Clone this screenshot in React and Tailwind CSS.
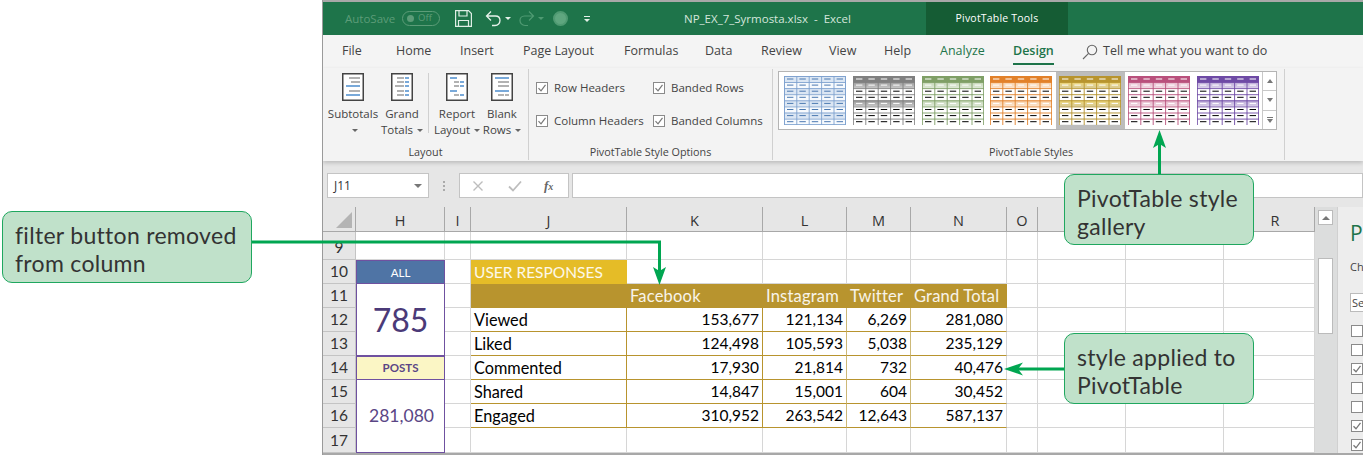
import React from "react";

const B = "#1f6fc0", G = "#7f7f7f";

function DocIcon({ rows }) {
  return (
    <svg width="22" height="28" viewBox="0 0 22 28" className="block">
      <rect x="0.75" y="0.75" width="20.5" height="26.5" fill="#fff" stroke="#444" strokeWidth="1.5" />
      {rows.map((r, i) => (
        <path key={i} d={`M${r[0]} ${r[1]}H${r[2]}`} stroke={r[3]} strokeWidth="1.2" />
      ))}
    </svg>
  );
}

const SUBICON = [[7,5,18,G],[9,9,18,G],[4,13,18,B],[7,18,18,G],[4,22,18,B]];
const GRANDICON = [[6,5,13,G],[14,5,18,B],[6,9,13,G],[14,9,18,B],[4,13,13,G],[14,13,18,B],[6,18,13,G],[14,18,18,B],[6,22,13,G],[14,22,18,B]];
const REPORTICON = [[4,5,11,B],[8,9,13,G],[14,9,18,B],[8,13,13,G],[14,13,18,B],[4,18,11,B],[8,22,13,G],[14,22,18,B]];
const BLANKICON = [[4,5,18,B],[7,9,18,G],[7,13,18,G],[4,18,18,B],[7,22,13,G],[14,22,18,G]];

function Caret({ color = "#666" }) {
  return <span className="inline-block w-0 h-0 border-l-[3px] border-r-[3px] border-t-[3px] border-l-transparent border-r-transparent align-middle ml-1" style={{ borderTopColor: color }} />;
}

function Big({ rows, l1, l2, w }) {
  return (
    <div className={`flex flex-col items-center ${w}`}>
      <DocIcon rows={rows} />
      <div className="mt-[5px] text-[11.5px] leading-[16px] text-[#444] whitespace-nowrap text-center">{l1}</div>
      <div className="text-[11.5px] leading-[16px] text-[#444] whitespace-nowrap text-center">
        {l2}
        <Caret />
      </div>
    </div>
  );
}

function Check({ label, w }) {
  return (
    <div className={`flex items-center ${w}`}>
      <span className="w-[12px] h-[12px] border border-[#8a8a8a] bg-white flex items-center justify-center shrink-0">
        <svg width="10" height="10" viewBox="0 0 10 10"><path d="M1.5 5.2 4 7.8 8.5 1.8" fill="none" stroke="#777" strokeWidth="1.2" /></svg>
      </span>
      <span className="ml-[6px] text-[11.5px] text-[#444] whitespace-nowrap">{label}</span>
    </div>
  );
}

function Swatch({ id, head, line, tint, dash = "#000", blue }) {
  const W = 62, H = 49, cw = W / 5, rh = 6.1;
  const cells = [];
  for (let r = 0; r < 8; r++) {
    const y = r * rh;
    const isHead = !blue && r === 0;
    const isBand = !blue && (r === 1 || r === 4);
    const fill = blue ? (r % 2 === 0 ? "#dbe6f3" : "#f7fafd") : isHead ? head : isBand ? `url(#band${id})` : "#fff";
    cells.push(<rect key={"f" + r} x="0" y={y} width={W} height={rh} fill={fill} />);
    for (let c = 0; c < 5; c++) {
      const dc = blue ? "#4a78b0" : isHead || isBand ? "#fff" : dash;
      cells.push(<path key={`d${r}${c}`} d={`M${c * cw + 3} ${y + 3}H${c * cw + cw - 3}`} stroke={dc} strokeWidth="1" />);
    }
    if (!isHead) cells.push(<path key={"h" + r} d={`M0 ${y + 0.4}H${W}`} stroke={line} strokeWidth="0.9" />);
  }
  for (let c = 0; c <= 5; c++) {
    cells.push(<path key={"v" + c} d={`M${Math.min(c * cw + 0.4, W - 0.4)} ${blue ? 0 : rh}V${H}`} stroke={line} strokeWidth="0.9" />);
  }
  if (blue) {
    cells.push(<rect key="o" x="0.4" y="0.4" width={W - 0.8} height={H - 0.8} fill="none" stroke={line} strokeWidth="0.9" />);
  }
  return (
    <svg width={W} height={H} viewBox={`0 0 ${W} ${H}`} className="block">
      <defs>
        <linearGradient id={`band${id}`} x1="0" y1="0" x2="0" y2="1">
          <stop offset="0" stopColor={tint || "#fff"} />
          <stop offset="1" stopColor={tint || "#fff"} stopOpacity="0.55" />
        </linearGradient>
      </defs>
      {cells}
    </svg>
  );
}

const SW = [
  { blue: true, line: "#7ea2cf" },
  { head: "#7f7f7f", line: "#7f7f7f", tint: "#9a9a9a" },
  { head: "#7f9f66", line: "#7f9f66", tint: "#c4d6b6" },
  { head: "#e2812a", line: "#e2812a", tint: "#f8cfa6" },
  { head: "#b8942e", line: "#b8942e", tint: "#eed677" },
  { head: "#b9507c", line: "#b9507c", tint: "#e6b9cc" },
  { head: "#6e4aa5", line: "#6e4aa5", tint: "#bcaad8" },
];

const COLS = ["H", "I", "J", "K", "L", "M", "N", "O", "", "", "R"];
const DATA = [
  ["Viewed", "153,677", "121,134", "6,269", "281,080"],
  ["Liked", "124,498", "105,593", "5,038", "235,129"],
  ["Commented", "17,930", "21,814", "732", "40,476"],
  ["Shared", "14,847", "15,001", "604", "30,452"],
  ["Engaged", "310,952", "263,542", "12,643", "587,137"],
];
const cellFont = { fontFamily: "Lato, sans-serif" };

function RowHead({ n }) {
  return (
    <div className="bg-[#e6e6e6] border-r border-b border-[#c4c4c4] flex items-end justify-center text-[15.5px] leading-[23px] text-[#333]" style={cellFont}>
      {n}
    </div>
  );
}
const blank = "bg-white border-r border-b border-[#d6d6d6]";

function Sheet() {
  const cells = [];
  cells.push(
    <div key="corner" className="bg-[#e6e6e6] border-r border-b border-[#a8a8a8] relative">
      <span className="absolute right-[3px] bottom-[3px] w-0 h-0 border-t-[16px] border-t-transparent border-r-[16px] border-r-[#b4b4b4]" />
    </div>
  );
  COLS.forEach((c, i) =>
    cells.push(
      <div key={"col" + i} className={`bg-[#e6e6e6] border-r border-b border-[#a8a8a8] flex items-center justify-center pt-[3px] text-[14.5px] text-[#333] ${c === "R" ? "pl-[12px]" : ""}`}>{c}</div>
    )
  );
  const trailing = (r) => ["O", "P", "Q", "R"].map((c) => <div key={c + r} className={blank} />);
  cells.push(<RowHead key="r9" n={9} />);
  for (let i = 0; i < 11; i++) cells.push(<div key={"b9" + i} className={blank} />);
  cells.push(<RowHead key="r10" n={10} />);
  cells.push(<div key="all" className="bg-[#4f74a5] border-x border-y border-[#6f51a0] text-white text-[11.5px] pt-[1px] flex items-center justify-center" style={cellFont}>ALL</div>);
  cells.push(<div key="i10" className={blank} />);
  cells.push(<div key="ur" className="bg-[#e5bc27] text-white/90 text-[15.5px] pl-[3px] pt-[1px] flex items-center whitespace-nowrap" style={cellFont}>USER RESPONSES</div>);
  for (const c of ["K", "L", "M", "N"]) cells.push(<div key={c + 10} className={blank} />);
  cells.push(...trailing(10));
  cells.push(<RowHead key="r11" n={11} />);
  cells.push(<div key="785" className="row-span-3 bg-white border-x border-b border-[#6f51a0] flex items-center justify-center text-[32px] text-[#4b3a78]" style={cellFont}>785</div>);
  cells.push(<div key="i11" className={blank} />);
  cells.push(<div key="j11" className="bg-[#b8942e]" />);
  [["Facebook", "K"], ["Instagram", "L"], ["Twitter", "M"], ["Grand Total", "N"]].forEach(([t, c]) =>
    cells.push(<div key={c + 11} className="bg-[#b8942e] text-white/90 text-[16.5px] tracking-[0.2px] pl-[3px] pt-[1px] flex items-center whitespace-nowrap" style={cellFont}>{t}</div>)
  );
  cells.push(...trailing(11));
  DATA.forEach((row, i) => {
    const n = 12 + i;
    cells.push(<RowHead key={"r" + n} n={n} />);
    if (n === 14) cells.push(<div key="posts" className="bg-[#fbf6c5] border-x border-y border-[#6f51a0] text-[#5a4685] text-[11.5px] font-bold flex items-center justify-center" style={cellFont}>POSTS</div>);
    if (n === 15) cells.push(<div key="281" className="row-span-3 bg-white border-x border-b border-[#6f51a0] flex items-center justify-center pl-[2px] text-[17.5px] text-[#5a4685]" style={cellFont}>281,080</div>);
    cells.push(<div key={"i" + n} className={blank} />);
    row.forEach((t, j) =>
      cells.push(
        <div key={n + "c" + j} className={`bg-white border-b border-r border-b-[#b8942e] ${j === 0 || j === 1 ? "border-r-[#b8942e]" : j === 4 ? "border-r-[#d6d6d6]" : "border-r-[#cdb978]"} flex items-center pt-[1px] text-black ${j === 0 ? "pl-[3px] text-[16.3px]" : "justify-end pr-[3px] text-[15.5px]"}`} style={cellFont}>{t}</div>
      )
    );
    cells.push(...trailing(n));
  });
  cells.push(<RowHead key="r17" n={17} />);
  for (let i = 0; i < 10; i++) cells.push(<div key={"b17" + i} className={blank} />);
  return (
    <div className="w-[992px] shrink-0 grid grid-cols-[33px_89px_26px_156px_136px_84px_64px_96px_31px_88px_98px_91px] grid-rows-[25px_28px_24px_24px_24px_24px_24px_24px_24px_25px]">
      {cells}
    </div>
  );
}

function Callout({ cls, children }) {
  return (
    <div className={`absolute bg-[#c0e1ca] border border-[#1fa75f] rounded-[10px] pl-[12px] pt-[9px] text-[23px] leading-[28px] text-[#333] whitespace-nowrap ${cls}`} style={{ fontFamily: "Lato, sans-serif", letterSpacing: "0.3px" }}>
      {children}
    </div>
  );
}

const TABS = [
  ["File", "w-[73px] pl-[19px]"], ["Home", "w-[64px]"], ["Insert", "w-[63px]"], ["Page Layout", "w-[101px]"], ["Formulas", "w-[81px]"], ["Data", "w-[56px]"], ["Review", "w-[68px]"], ["View", "w-[55px]"], ["Help", "w-[56px]"],
];

export default function App() {
  return (
    <div className="relative w-[1363px] h-[455px] overflow-hidden bg-white flex" style={{ fontFamily: '"Open Sans", sans-serif' }}>
      <div className="w-[322px] shrink-0" />
      <div className="w-[1041px] h-[455px] flex flex-col border-l border-[#9a9a9a] bg-[#e6e6e6] overflow-hidden">
        {/* title bar */}
        <div className="h-[35px] shrink-0 border-t-2 border-[#a8a8a8] bg-[#1e744a] flex items-center relative">
          <span className="ml-[22px] text-[11.5px] text-[#5c9c78] w-[56px]">AutoSave</span>
          <span className="ml-[1px] w-[38px] h-[15px] rounded-full border border-[#5c9c78] flex items-center pl-[4px] gap-[4px]">
            <span className="w-[7px] h-[7px] rounded-full bg-[#5c9c78]" />
            <span className="text-[9.5px] text-[#5c9c78]">Off</span>
          </span>
          <svg className="ml-[15px]" width="17" height="17" viewBox="0 0 17 17" fill="none" stroke="#dfeee6" strokeWidth="1.2">
            <path d="M.6.6H13.5L16.4 3.5V16.4H.6Z" /><path d="M4 .6V6H12V.6M3.5 16.4V10.5H13.5V16.4" />
          </svg>
          <svg className="ml-[13px]" width="17" height="17" viewBox="0 0 17 17" fill="none" stroke="#e6f1ea" strokeWidth="1.3">
            <path d="M6 1.5 1.5 6 6 10.5M1.5 6H10.5C13.5 6 15 8 15 10.5S13 15.5 10 15.5H7" />
          </svg>
          <span className="ml-[3px] w-0 h-0 border-l-[3px] border-r-[3px] border-t-[3px] border-l-transparent border-r-transparent border-t-[#e6f1ea]" />
          <svg className="ml-[7px]" width="17" height="17" viewBox="0 0 17 17" fill="none" stroke="#4f9a72" strokeWidth="1.2">
            <path d="M11 1.5 15.5 6 11 10.5M15.5 6H6.5C3.5 6 2 8 2 10.5S4 15.5 7 15.5H10" />
          </svg>
          <span className="ml-[3px] w-0 h-0 border-l-[3px] border-r-[3px] border-t-[3px] border-l-transparent border-r-transparent border-t-[#4f9a72]" />
          <span className="ml-[9px] w-[15px] h-[15px] rounded-full border-[2px] border-[#4f9a72] bg-[#5fa67f]" />
          <span className="ml-[16px] flex flex-col items-center gap-[2px]">
            <span className="w-[6px] h-[1px] bg-[#e6f1ea]" />
            <span className="w-0 h-0 border-l-[3px] border-r-[3px] border-t-[3px] border-l-transparent border-r-transparent border-t-[#e6f1ea]" />
          </span>
          <span className="ml-[94px] text-[11.5px] text-[#d5e6dc] whitespace-pre w-[242px]">NP_EX_7_Syrmosta.xlsx  -  Excel</span>
          <span className="w-[142px] h-[33px] bg-[#155c34] text-white text-[10.5px] flex items-center justify-center tracking-[0.2px]">PivotTable Tools</span>
        </div>
        {/* tabs */}
        <div className="h-[33px] shrink-0 bg-[#f4f4f4] flex items-center text-[12.5px] text-[#444]">
          {TABS.map(([t, c]) => (
            <span key={t} className={`${c} shrink-0 whitespace-nowrap`}>{t}</span>
          ))}
          <span className="w-[73px] shrink-0 text-[#1e744a]">Analyze</span>
          <span className="w-[69px] shrink-0 relative text-[#1e744a] font-semibold">
            Design
            <span className="absolute left-0 top-[21px] w-[41px] h-[2px] bg-[#1e744a]" />
          </span>
          <svg width="16" height="16" viewBox="0 0 16 16" fill="none" stroke="#666" strokeWidth="1.1" className="shrink-0">
            <circle cx="10" cy="6" r="4.7" /><path d="M6.6 9.4 1 15" />
          </svg>
          <span className="ml-[5px] whitespace-nowrap">Tell me what you want to do</span>
        </div>
        {/* ribbon */}
        <div className="h-[93px] shrink-0 bg-[#f3f3f3] flex shadow-[0_2px_4px_rgba(0,0,0,0.18)] relative">
          <div className="w-[206px] shrink-0 border-r border-[#d0d0d0] my-[1px] flex flex-col items-stretch">
            <div className="h-[76px] flex pt-[4px] pl-[2px] items-start">
              <Big rows={SUBICON} l1="Subtotals" l2="" w="w-[56px]" />
              <Big rows={GRANDICON} l1="Grand" l2="Totals" w="w-[42px]" />
              <span className="w-[1px] h-[60px] bg-[#d0d0d0] ml-[5px]" />
              <Big rows={REPORTICON} l1="Report" l2="Layout" w="w-[56px]" />
              <Big rows={BLANKICON} l1="Blank" l2="Rows" w="w-[34px]" />
            </div>
            <div className="text-center text-[10.8px] text-[#444] pt-[2px] leading-[16px]">Layout</div>
          </div>
          <div className="w-[244px] shrink-0 border-r border-[#d0d0d0] my-[1px] flex flex-col">
            <div className="h-[76px] pl-[7px] pt-[10px] flex flex-col gap-[16px]">
              <div className="flex"><Check label="Row Headers" w="w-[117px]" /><Check label="Banded Rows" /></div>
              <div className="flex"><Check label="Column Headers" w="w-[117px]" /><Check label="Banded Columns" /></div>
            </div>
            <div className="text-center text-[10.8px] text-[#444] pt-[2px] leading-[16px]">PivotTable Style Options</div>
          </div>
          <div className="w-[512px] shrink-0 border-r border-[#d0d0d0] my-[1px] flex flex-col pl-[5px]">
            <div className="h-[76px] pt-[2px]">
              <div className="w-[499px] h-[59px] border border-[#b4b4b4] bg-white flex">
                <div className="w-[483px] flex items-start pl-[2px] pt-[4px]">
                  {SW.map((s, i) => (
                    <div key={i} className={`w-[68.8px] h-[57px] shrink-0 -mt-[4px] pt-[4px] pl-[3px] ${i === 4 ? "bg-[#bdbdbd]" : ""}`}>
                      <Swatch id={i} {...s} />
                    </div>
                  ))}
                </div>
                <div className="w-[14px] border-l border-[#c8c8c8] flex flex-col">
                  {["up", "down", "more"].map((k) => (
                    <div key={k} className={`flex-1 flex flex-col items-center justify-center ${k !== "more" ? "border-b border-[#c8c8c8]" : ""}`}>
                      {k === "more" && <span className="w-[6px] h-[1px] bg-[#777] mb-[1px]" />}
                      <span className={`w-0 h-0 border-l-[3px] border-r-[3px] border-l-transparent border-r-transparent ${k === "up" ? "border-b-[4px] border-b-[#777]" : "border-t-[4px] border-t-[#777]"}`} />
                    </div>
                  ))}
                </div>
              </div>
            </div>
            <div className="text-center text-[10.8px] text-[#444] pt-[2px] leading-[16px]">PivotTable Styles</div>
          </div>
        </div>
        {/* formula bar */}
        <div className="h-[46px] shrink-0 pt-[12px] pl-[4px] flex items-start">
          <div className="w-[102px] h-[25px] bg-white border border-[#c4c4c4] flex items-center justify-between px-[6px] text-[12px] text-[#333]">
            J11
            <span className="w-0 h-0 border-l-[4px] border-r-[4px] border-t-[4px] border-l-transparent border-r-transparent border-t-[#777]" />
          </div>
          <div className="w-[30px] h-[25px] flex flex-col items-center justify-center gap-[2px]">
            {[0, 1, 2].map((i) => <span key={i} className="w-[2px] h-[2px] bg-[#aaa]" />)}
          </div>
          <div className="w-[110px] h-[25px] bg-white border border-[#c4c4c4] flex items-center pl-[12px]">
            <svg width="12" height="12" viewBox="0 0 12 12" stroke="#bdbdbd" strokeWidth="1.4"><path d="M1.5 1.5 10.5 10.5M10.5 1.5 1.5 10.5" /></svg>
            <svg className="ml-[24px]" width="14" height="12" viewBox="0 0 14 12" fill="none" stroke="#bdbdbd" strokeWidth="1.8"><path d="M1 6.5 5 10.5 13 1.5" /></svg>
            <span className="ml-[22px] italic font-bold text-[13px] text-[#666]" style={{ fontFamily: '"Liberation Serif", serif' }}>f<span className="text-[10px]">x</span></span>
          </div>
          <div className="ml-[3px] flex-1 h-[25px] bg-white border border-[#c4c4c4]" />
        </div>
        {/* sheet */}
        <div className="flex-1 min-h-0 flex overflow-hidden border-b-2 border-[#a8a8a8]">
          <Sheet />
          <div className="w-[22px] shrink-0 bg-[#dcdddd] flex flex-col items-start pl-[3px] pt-[3px]">
            <div className="w-[15px] h-[15px] bg-white border border-[#bbb] flex items-center justify-center">
              <span className="w-0 h-0 border-l-[4px] border-r-[4px] border-b-[4px] border-l-transparent border-r-transparent border-b-[#777]" />
            </div>
            <div className="mt-[33px] w-[15px] h-[76px] bg-white border border-[#bbb]" />
          </div>
          <div className="flex-1 min-w-0 border-l border-[#d0d0d0] bg-[#ededed] pl-[12px] overflow-hidden whitespace-nowrap">
            <div className="text-[21px] leading-[28px] text-[#1e744a] mt-[12px]">P</div>
            <div className="text-[11px] leading-[14px] text-[#444] mt-[13px]">Ch</div>
            <div className="w-[40px] h-[19px] border border-[#bbb] bg-white text-[11px] text-[#444] leading-[17px] pl-[1px] mt-[19px]">Se</div>
            <div className="mt-[13px] flex flex-col gap-[7px] ml-[1px]">
              {[0, 0, 1, 0, 0, 1, 1].map((c, i) => (
                <span key={i} className="w-[12px] h-[12px] border border-[#8a8a8a] bg-white flex items-center justify-center shrink-0">
                  {c ? <svg width="10" height="10" viewBox="0 0 10 10"><path d="M1.5 5.2 4 7.8 8.5 1.8" fill="none" stroke="#777" strokeWidth="1.3" /></svg> : null}
                </span>
              ))}
            </div>
          </div>
        </div>
      </div>

      {/* annotations */}
      <svg className="absolute left-0 top-0 pointer-events-none" width="1363" height="455" viewBox="0 0 1363 455" fill="none">
        <path d="M252 242H659.5V272" stroke="#00a651" strokeWidth="3" />
        <path d="M659.5 285 653 267 659.5 271 666 267Z" fill="#00a651" />
        <path d="M1159.5 174V142" stroke="#00a651" strokeWidth="3" />
        <path d="M1159.5 130 1153 148 1159.5 144 1166 148Z" fill="#00a651" />
        <path d="M1064 369H1018" stroke="#00a651" strokeWidth="3" />
        <path d="M1004 369 1023 362.5 1018 369 1023 375.5Z" fill="#00a651" />
      </svg>
      <Callout cls="left-[2px] top-[211px] w-[250px] h-[72px]">filter button removed<br />from column</Callout>
      <Callout cls="left-[1064px] top-[174px] w-[190px] h-[71px]">PivotTable style<br />gallery</Callout>
      <Callout cls="left-[1064px] top-[333px] w-[190px] h-[71px]">style applied to<br />PivotTable</Callout>
    </div>
  );
}
